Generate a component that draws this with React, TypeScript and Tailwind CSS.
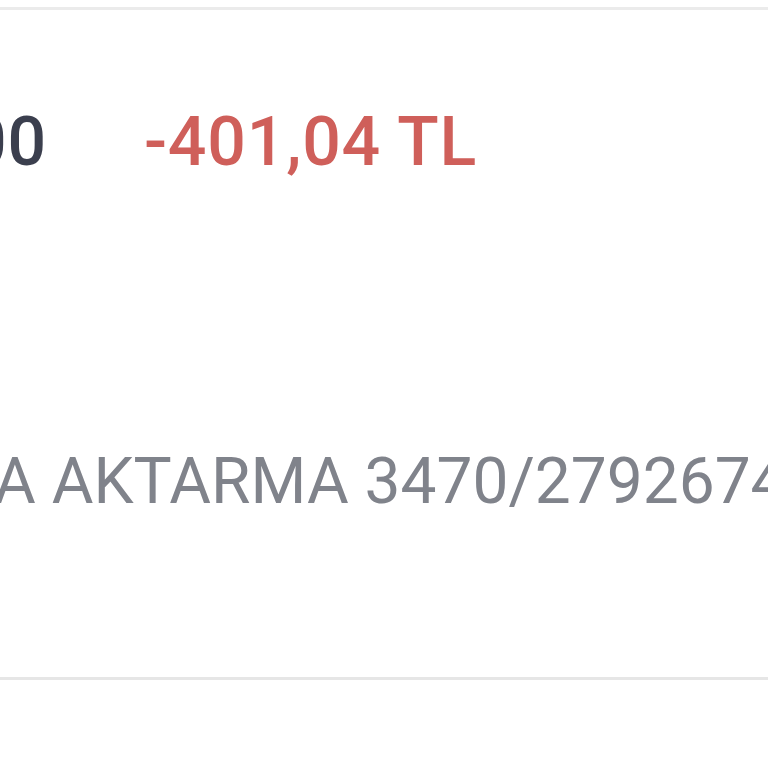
export default function App() {
  return (
    <div className="w-[768px] h-[768px] overflow-hidden bg-white" style={{ fontFamily: "Roboto, 'Noto Sans', sans-serif" }}>
      <div className="h-[10px] border-b-[3px] border-[#ebebeb]" />
      <div className="flex flex-col h-[670px] border-b-[3px] border-[#e6e6e6]">
        <div className="flex items-center whitespace-nowrap pt-[92px] -ml-[32px] gap-[97px] text-[68px] font-medium leading-[80px] tracking-[0.8px]">
          <span className="text-[#3b3f4e]">00</span>
          <span className="text-[#cf5f5a]">-401,04 TL</span>
        </div>
        <div className="whitespace-nowrap pt-[260px] -ml-[6px] text-[64px] leading-[80px] text-[#80838b]">
          A AKTARMA 3470/2792674
        </div>
      </div>
    </div>
  );
}
